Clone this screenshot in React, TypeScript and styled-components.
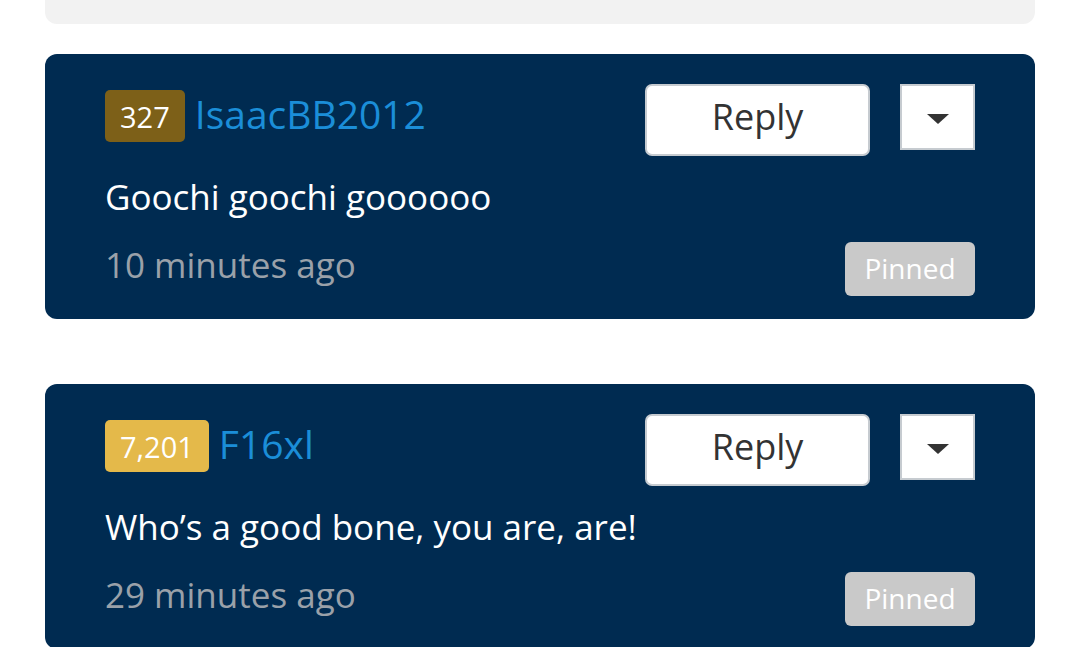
import styled, { createGlobalStyle } from 'styled-components';

const GlobalStyle = createGlobalStyle`
  html, body {
    margin: 0;
    padding: 0;
    background: #ffffff;
    font-family: 'Open Sans', 'Noto Sans', sans-serif;
    overflow: hidden;
  }
`;

interface Comment {
  score: string;
  scoreTone: 'bronze' | 'gold';
  user: string;
  text: string;
  time: string;
}

const comments: Comment[] = [
  { score: '327', scoreTone: 'bronze', user: 'IsaacBB2012', text: 'Goochi goochi goooooo', time: '10 minutes ago' },
  { score: '7,201', scoreTone: 'gold', user: 'F16xl', text: 'Who’s a good bone, you are, are!', time: '29 minutes ago' },
];

const Page = styled.div`
  width: 1080px;
  height: 647px;
  overflow: hidden;
  padding: 0 45px;
  box-sizing: border-box;
  display: flex;
  flex-direction: column;
  gap: 65px;
`;

const PrevCard = styled.div`
  height: 24px;
  margin-bottom: -35px;
  background: #f2f2f2;
  border-radius: 0 0 12px 12px;
  flex-shrink: 0;
`;

const Card = styled.div`
  background: #002b51;
  border-radius: 12px;
  padding: 30px 60px 23px;
  display: flex;
  flex-direction: column;
  flex-shrink: 0;
`;

const Header = styled.div`
  display: flex;
  justify-content: space-between;
  align-items: flex-start;
`;

const Author = styled.div`
  display: flex;
  align-items: center;
  gap: 10px;
  margin-top: 4px;
`;

const Score = styled.span<{ $tone: 'bronze' | 'gold' }>`
  display: inline-flex;
  align-items: center;
  justify-content: center;
  height: 52px;
  padding: 0 15px;
  border-radius: 5px;
  font-size: 29px;
  color: #ffffff;
  background: ${(p) => (p.$tone === 'gold' ? '#e4b94a' : '#7d6018')};
`;

const UserName = styled.span`
  font-size: 39px;
  line-height: 52px;
  color: #1b8ed8;
  padding-bottom: 4px;
`;

const Actions = styled.div`
  display: flex;
  gap: 30px;
  align-items: flex-start;
`;

const ReplyButton = styled.button`
  width: 225px;
  height: 72px;
  background: #ffffff;
  border: 2px solid #c6cbd0;
  border-radius: 7px;
  font-family: inherit;
  font-size: 36px;
  line-height: 48px;
  color: #333333;
  padding: 0 0 6px;
`;

const MenuButton = styled.button`
  width: 75px;
  height: 66px;
  background: #ffffff;
  border: 2px solid #c6cbd0;
  border-radius: 0;
  padding: 4px 0 0;
  display: flex;
  align-items: center;
  justify-content: center;
`;

const Caret = styled.span`
  width: 0;
  height: 0;
  border-left: 11px solid transparent;
  border-right: 11px solid transparent;
  border-top: 10px solid #333333;
`;

const Body = styled.p`
  margin: 18px 0 0;
  font-size: 35px;
  line-height: 46px;
  color: #ffffff;
`;

const Footer = styled.div`
  display: flex;
  justify-content: space-between;
  align-items: flex-end;
  margin-top: 22px;
`;

const Time = styled.span`
  font-size: 35px;
  line-height: 46px;
  color: #9aa1a9;
  padding-bottom: 8px;
`;

const Pinned = styled.span`
  display: inline-flex;
  align-items: center;
  justify-content: center;
  box-sizing: border-box;
  width: 130px;
  height: 54px;
  padding-bottom: 3px;
  border-radius: 6px;
  background: #c9c9c9;
  color: #ffffff;
  font-size: 28px;
`;

export default function App() {
  return (
    <>
      <GlobalStyle />
      <Page>
        <PrevCard />
        {comments.map((c) => (
          <Card key={c.user}>
            <Header>
              <Author>
                <Score $tone={c.scoreTone}>{c.score}</Score>
                <UserName>{c.user}</UserName>
              </Author>
              <Actions>
                <ReplyButton>Reply</ReplyButton>
                <MenuButton>
                  <Caret />
                </MenuButton>
              </Actions>
            </Header>
            <Body>{c.text}</Body>
            <Footer>
              <Time>{c.time}</Time>
              <Pinned>Pinned</Pinned>
            </Footer>
          </Card>
        ))}
      </Page>
    </>
  );
}
